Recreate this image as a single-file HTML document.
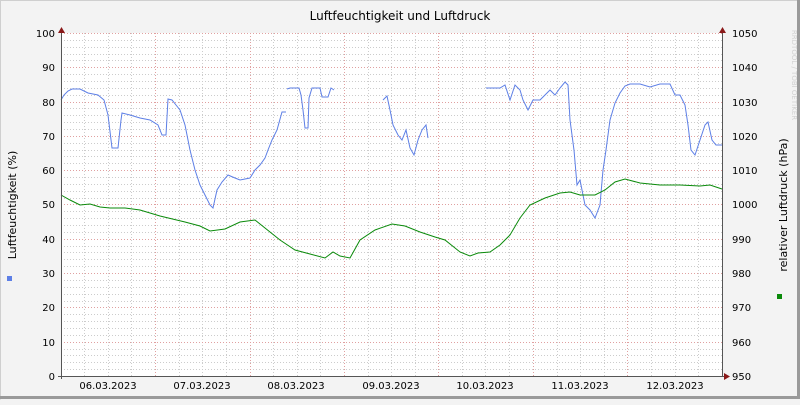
<!DOCTYPE html><html><head><style>body{margin:0;background:#f3f3f3}</style></head><body>
<svg width="800" height="400" xmlns="http://www.w3.org/2000/svg" font-family="DejaVu Sans, Liberation Sans, sans-serif">
<rect width="800" height="400" fill="#f3f3f3"/>
<path d="M0.5 399.5V0.5H799.5" stroke="#cfcfcf" fill="none"/>
<path d="M0 397.5H799M798.5 0V399" stroke="#9a9a9a" stroke-width="3" fill="none"/>
<rect x="61" y="33" width="661" height="343" fill="#fff"/>
<path stroke="#cccccc" stroke-dasharray="1,2" fill="none" d="M61 369.5H722M61 362.5H722M61 355.5H722M61 349.5H722M61 335.5H722M61 328.5H722M61 321.5H722M61 314.5H722M61 301.5H722M61 294.5H722M61 287.5H722M61 280.5H722M61 266.5H722M61 259.5H722M61 252.5H722M61 246.5H722M61 232.5H722M61 225.5H722M61 218.5H722M61 211.5H722M61 198.5H722M61 191.5H722M61 184.5H722M61 177.5H722M61 163.5H722M61 156.5H722M61 150.5H722M61 143.5H722M61 129.5H722M61 122.5H722M61 115.5H722M61 108.5H722M61 95.5H722M61 88.5H722M61 81.5H722M61 74.5H722M61 60.5H722M61 54.5H722M61 47.5H722M61 40.5H722
M84.5 33V376M108.5 33V376M131.5 33V376M179.5 33V376M202.5 33V376M226.5 33V376M273.5 33V376M297.5 33V376M320.5 33V376M368.5 33V376M391.5 33V376M415.5 33V376M462.5 33V376M485.5 33V376M509.5 33V376M557.5 33V376M580.5 33V376M604.5 33V376M651.5 33V376M675.5 33V376M698.5 33V376"/>
<path stroke="#e0a0a0" stroke-dasharray="1,2" fill="none" d="M61 342.5H722M61 307.5H722M61 273.5H722M61 239.5H722M61 204.5H722M61 170.5H722M61 136.5H722M61 102.5H722M61 67.5H722M61 33.5H722M155.5 33V376M250.5 33V376M344.5 33V376M438.5 33V376M533.5 33V376M627.5 33V376"/>
<g fill="none" stroke="#5d7fe6" stroke-width="1">
<polyline points="61,100 64,95 68,91 72,89 80,89 88,93 98,95 104,100 108,115 112,148 118,148 121,120 122,113 130,115 140,118 150,120 158,125 162,135 166,135 168,99 172,100 176,105 180,110 185,125 190,150 195,170 200,185 205,195 210,205 213,208 217,190 222,182 228,175 235,178 240,180 250,178 255,170 260,165 265,158 268,150 272,140 277,130 282,112 286,112"/>
<polyline points="287,89 290,88 299,88 301,95 303,110 305,128 308,128 309,98 312,88 320,88 322,97 328,97 331,88 334,90"/>
<polyline points="383,100 387,96 390,110 393,125 398,135 402,140 406,130 410,148 414,155 418,140 422,130 426,125 428,138"/>
<polyline points="486,88 500,88 505,85 510,100 515,85 520,90 523,100 528,110 533,100 540,100 545,95 550,90 555,95 560,88 565,82 568,85 570,120 574,150 577,185 580,180 585,205 590,210 595,218 600,205 603,170 606,150 610,120 615,103 620,93 625,86 630,84 640,84 650,87 660,84 670,84 675,95 680,95 685,105 688,125 691,150 695,155 700,140 705,125 708,122 712,140 716,145 722,145"/>
</g>
<polyline fill="none" stroke="#0a8a0a" stroke-width="1" points="61,195 70,200 80,205 90,204 100,207 110,208 125,208 140,210 160,216 185,222 200,226 210,231 225,229 240,222 255,220 265,228 280,240 295,250 310,254 325,258 333,252 340,256 350,258 360,240 375,230 392,224 405,226 420,232 435,237 445,240 460,252 470,256 478,253 490,252 500,245 510,235 520,218 530,205 545,198 560,193 570,192 580,195 595,195 605,190 615,182 625,179 640,183 660,185 680,185 700,186 710,185 722,189"/>
<path d="M61.5 30V379M58 376.5H726M722.5 30V376" stroke="#555" fill="none"/>
<path d="M58 33L61.5 27L65 33Z M719 33L722.5 27L726 33Z M724 373L730 376.5L724 380Z" fill="#8b1a1a"/>
<g font-size="10" fill="#000" text-anchor="end">
<text x="55" y="380">0</text><text x="55" y="346">10</text><text x="55" y="311">20</text><text x="55" y="277">30</text><text x="55" y="243">40</text><text x="55" y="208">50</text><text x="55" y="174">60</text><text x="55" y="140">70</text><text x="55" y="106">80</text><text x="55" y="71">90</text><text x="55" y="37">100</text>
</g>
<g font-size="10" fill="#000">
<text x="732" y="380">950</text><text x="732" y="346">960</text><text x="732" y="311">970</text><text x="732" y="277">980</text><text x="732" y="243">990</text><text x="732" y="208">1000</text><text x="732" y="174">1010</text><text x="732" y="140">1020</text><text x="732" y="106">1030</text><text x="732" y="71">1040</text><text x="732" y="37">1050</text>
</g>
<g font-size="10" text-anchor="middle">
<text x="108" y="389">06.03.2023</text><text x="202" y="389">07.03.2023</text><text x="296" y="389">08.03.2023</text><text x="391" y="389">09.03.2023</text><text x="485" y="389">10.03.2023</text><text x="580" y="389">11.03.2023</text><text x="675" y="389">12.03.2023</text>
</g>
<text x="400" y="20" font-size="12" text-anchor="middle">Luftfeuchtigkeit und Luftdruck</text>
<text transform="translate(16,205) rotate(-90)" font-size="11" text-anchor="middle">Luftfeuchtigkeit (%)</text>
<text transform="translate(787,205) rotate(-90)" font-size="11" text-anchor="middle">relativer Luftdruck (hPa)</text>
<text transform="translate(792,75) rotate(90)" font-size="7" fill="#d0d0d0" text-anchor="middle">RRDTOOL / TOBI OETIKER</text>
<rect x="7" y="276" width="5" height="5" fill="#5d7fe6"/>
<rect x="777" y="294" width="5" height="5" fill="#0a8a0a"/>
</svg></body></html>
